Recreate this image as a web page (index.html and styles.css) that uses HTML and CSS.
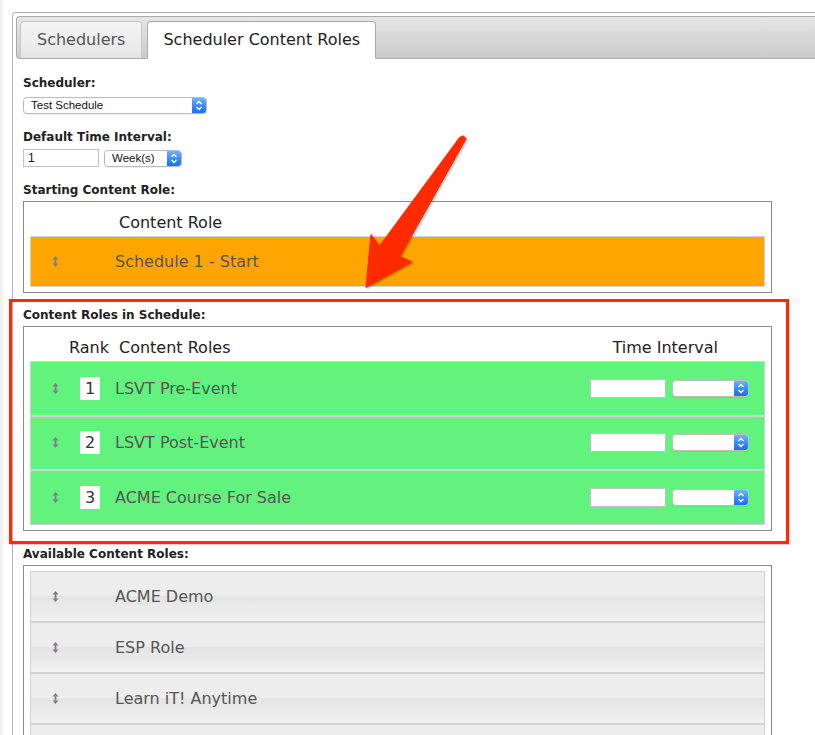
FILE: index.html
```html
<!DOCTYPE html>
<html>
<head>
<meta charset="utf-8">
<title>Scheduler Content Roles</title>
<link rel="stylesheet" href="styles.css">
</head>
<body>
<div class="page">
  <div class="panel">
    <div class="tabbar">
      <div class="tab">Schedulers</div>
      <div class="tab active">Scheduler Content Roles</div>
    </div>
    <div class="content">
      <div class="field first">
        <label class="lbl lbl-sel">Scheduler:</label>
        <div class="select sel-wide">
          <span class="sel-text">Test Schedule</span>
          <span class="sel-btn"><svg width="14" height="15" viewBox="0 0 14 15"><polyline points="4.5,6 7,3.5 9.5,6" fill="none" stroke="#fff" stroke-width="1.4"/><polyline points="4.5,9 7,11.5 9.5,9" fill="none" stroke="#fff" stroke-width="1.4"/></svg></span>
        </div>
      </div>

      <div class="field">
        <label class="lbl lbl-int">Default Time Interval:</label>
        <div class="inline">
          <input class="input" type="text" value="1">
          <div class="select sel-week">
            <span class="sel-text">Week(s)</span>
            <span class="sel-btn"><svg width="14" height="15" viewBox="0 0 14 15"><polyline points="4.5,6 7,3.5 9.5,6" fill="none" stroke="#fff" stroke-width="1.4"/><polyline points="4.5,9 7,11.5 9.5,9" fill="none" stroke="#fff" stroke-width="1.4"/></svg></span>
          </div>
        </div>
      </div>

      <div class="field">
        <label class="lbl">Starting Content Role:</label>
        <div class="box">
          <div class="box-head"><span class="h-role">Content Role</span></div>
          <div class="row orange">
            <span class="drag"><svg width="7" height="11" viewBox="0 0 7 11"><path d="M3.5 0 L6.5 3.6 L0.5 3.6 Z M2.6 3.6 H4.4 V7.4 H2.6 Z M0.5 7.4 L6.5 7.4 L3.5 11 Z" fill="#857d88"/></svg></span>
            <span class="name no-rank">Schedule 1 - Start</span>
          </div>
        </div>
      </div>

      <div class="field highlight">
        <label class="lbl">Content Roles in Schedule:</label>
        <div class="box">
          <div class="box-head">
            <span class="h-rank">Rank</span>
            <span class="h-roles">Content Roles</span>
            <span class="h-time">Time Interval</span>
          </div>
          <div class="row green">
            <span class="drag"><svg width="7" height="11" viewBox="0 0 7 11"><path d="M3.5 0 L6.5 3.6 L0.5 3.6 Z M2.6 3.6 H4.4 V7.4 H2.6 Z M0.5 7.4 L6.5 7.4 L3.5 11 Z" fill="#857d88"/></svg></span>
            <span class="rank">1</span>
            <span class="name">LSVT Pre-Event</span>
            <input class="input row-input" type="text" value="">
            <div class="select sel-row">
              <span class="sel-text"></span>
              <span class="sel-btn"><svg width="14" height="15" viewBox="0 0 14 15"><polyline points="4.5,6 7,3.5 9.5,6" fill="none" stroke="#fff" stroke-width="1.4"/><polyline points="4.5,9 7,11.5 9.5,9" fill="none" stroke="#fff" stroke-width="1.4"/></svg></span>
            </div>
          </div>
          <div class="row green">
            <span class="drag"><svg width="7" height="11" viewBox="0 0 7 11"><path d="M3.5 0 L6.5 3.6 L0.5 3.6 Z M2.6 3.6 H4.4 V7.4 H2.6 Z M0.5 7.4 L6.5 7.4 L3.5 11 Z" fill="#857d88"/></svg></span>
            <span class="rank">2</span>
            <span class="name">LSVT Post-Event</span>
            <input class="input row-input" type="text" value="">
            <div class="select sel-row">
              <span class="sel-text"></span>
              <span class="sel-btn"><svg width="14" height="15" viewBox="0 0 14 15"><polyline points="4.5,6 7,3.5 9.5,6" fill="none" stroke="#fff" stroke-width="1.4"/><polyline points="4.5,9 7,11.5 9.5,9" fill="none" stroke="#fff" stroke-width="1.4"/></svg></span>
            </div>
          </div>
          <div class="row green">
            <span class="drag"><svg width="7" height="11" viewBox="0 0 7 11"><path d="M3.5 0 L6.5 3.6 L0.5 3.6 Z M2.6 3.6 H4.4 V7.4 H2.6 Z M0.5 7.4 L6.5 7.4 L3.5 11 Z" fill="#857d88"/></svg></span>
            <span class="rank">3</span>
            <span class="name">ACME Course For Sale</span>
            <input class="input row-input" type="text" value="">
            <div class="select sel-row">
              <span class="sel-text"></span>
              <span class="sel-btn"><svg width="14" height="15" viewBox="0 0 14 15"><polyline points="4.5,6 7,3.5 9.5,6" fill="none" stroke="#fff" stroke-width="1.4"/><polyline points="4.5,9 7,11.5 9.5,9" fill="none" stroke="#fff" stroke-width="1.4"/></svg></span>
            </div>
          </div>
        </div>
      </div>

      <div class="field after-highlight">
        <label class="lbl">Available Content Roles:</label>
        <div class="box box-avail">
          <div class="row grey">
            <span class="drag"><svg width="7" height="11" viewBox="0 0 7 11"><path d="M3.5 0 L6.5 3.6 L0.5 3.6 Z M2.6 3.6 H4.4 V7.4 H2.6 Z M0.5 7.4 L6.5 7.4 L3.5 11 Z" fill="#857d88"/></svg></span>
            <span class="name no-rank">ACME Demo</span>
          </div>
          <div class="row grey">
            <span class="drag"><svg width="7" height="11" viewBox="0 0 7 11"><path d="M3.5 0 L6.5 3.6 L0.5 3.6 Z M2.6 3.6 H4.4 V7.4 H2.6 Z M0.5 7.4 L6.5 7.4 L3.5 11 Z" fill="#857d88"/></svg></span>
            <span class="name no-rank">ESP Role</span>
          </div>
          <div class="row grey">
            <span class="drag"><svg width="7" height="11" viewBox="0 0 7 11"><path d="M3.5 0 L6.5 3.6 L0.5 3.6 Z M2.6 3.6 H4.4 V7.4 H2.6 Z M0.5 7.4 L6.5 7.4 L3.5 11 Z" fill="#857d88"/></svg></span>
            <span class="name no-rank">Learn iT! Anytime</span>
          </div>
          <div class="row grey"></div>
        </div>
      </div>
    </div>
  </div>
</div>

<svg class="arrow" width="815" height="735" viewBox="0 0 815 735">
  <polygon points="459.5,137.5 463,135.8 466.2,138.6 400,256.5 412,262 366,287.5 371,234.5 379.5,246" fill="#ff2a00" stroke="#ff2a00" stroke-width="1" stroke-linejoin="round"/>
</svg>
</body>
</html>
```

FILE: styles.css
```css
html, body {
  margin: 0;
  padding: 0;
  background: #fff;
}

body {
  position: relative;
  font-family: "DejaVu Sans", Verdana, sans-serif;
  color: #222;
  overflow: hidden;
  height: 735px;
}

.page {
  border-left: 3px solid #f1f1f1;
  padding: 12px 0 0 9px;
}

.panel {
  border: 1px solid #b3b3b3;
  border-right: none;
  border-radius: 4px 0 0 0;
  padding: 3px 0 0 3px;
  min-height: 760px;
}

/* ---------- tabs ---------- */
.tabbar {
  display: flex;
  align-items: flex-end;
  height: 41px;
  padding-left: 3px;
  border: 1px solid #aaa;
  border-right: none;
  border-radius: 4px 0 0 4px;
  background: linear-gradient(to bottom, #e6e6e6 0%, #d6d6d6 60%, #cbcbcb 100%);
}

.tab {
  box-sizing: border-box;
  height: 38px;
  margin-bottom: -1px;
  padding: 0 16px;
  border: 1px solid #c6c6c6;
  border-bottom-color: #aaa;
  border-radius: 4px 4px 0 0;
  background: linear-gradient(to bottom, #f3f3f3 0%, #ececec 60%, #e4e4e4 100%);
  color: #555;
  font-size: 16px;
  line-height: 36px;
  white-space: nowrap;
}

.tab.active {
  margin-left: 5px;
  padding: 0 15px;
  border-color: #aaa;
  border-bottom-color: #fff;
  background: #fff;
  color: #222;
}

/* ---------- content ---------- */
.content {
  padding: 17px 0 0 7px;
}

.field {
  margin-top: 16px;
}

.field.first {
  margin-top: 0;
}

.lbl {
  display: block;
  font-weight: bold;
  font-size: 12px;
  line-height: 14px;
  color: #222;
  margin-bottom: 4px;
}

.lbl-sel {
  margin-bottom: 7px;
}

.lbl-int {
  margin-bottom: 5px;
}

.inline {
  display: flex;
  align-items: center;
}

.input {
  box-sizing: border-box;
  width: 76px;
  height: 18px;
  margin: 0;
  padding: 0 0 0 4px;
  border: 1px solid #c2c2c2;
  border-radius: 0;
  background: #fff;
  font-family: "Liberation Sans", Arial, sans-serif;
  font-size: 12px;
  color: #111;
  outline: none;
}

.select {
  box-sizing: border-box;
  display: flex;
  align-items: stretch;
  height: 17px;
  border: 1px solid #bcbcbc;
  border-radius: 4px;
  background: #fff;
  overflow: hidden;
  box-shadow: 0 1px 0 rgba(0, 0, 0, 0.06);
}

.sel-text {
  flex: 1;
  padding-left: 7px;
  font-family: "Liberation Sans", Arial, sans-serif;
  font-size: 11.5px;
  line-height: 15px;
  color: #111;
  white-space: nowrap;
}

.sel-btn {
  width: 14px;
  display: flex;
  align-items: center;
  justify-content: center;
  background: linear-gradient(to bottom, #72b3ff 0%, #3d8cfb 50%, #1a6ff3 100%);
}

.sel-wide {
  width: 184px;
}

.sel-week {
  width: 78px;
  margin-left: 5px;
}

/* ---------- boxes ---------- */
.box {
  box-sizing: border-box;
  width: 749px;
  border: 1px solid #8a8a8a;
  padding: 6px 6px 5px 6px;
  background: #fff;
}

.box-avail {
  padding-top: 5px;
  min-height: 220px;
}

.box-head {
  display: flex;
  align-items: center;
  height: 28px;
  font-size: 16px;
  color: #222;
  padding-left: 39px;
}

.h-role {
  margin-left: 50px;
}

.h-roles {
  margin-left: 10px;
}

.h-time {
  margin-left: auto;
  margin-right: 47px;
}

.row {
  box-sizing: border-box;
  display: flex;
  align-items: center;
  height: 51px;
  border: 1px solid #d2d2d2;
  font-size: 16px;
  color: #555;
}

.row.orange {
  background: #ffa500;
  border-color: #cfd3d6;
}

.row.green {
  height: 54.5px;
  background: #62f27e;
}

.row.grey {
  background: linear-gradient(to bottom, #ededed 0%, #ededed 50%, #e4e4e4 50%, #f1f1f1 100%);
}

.drag {
  display: flex;
  width: 7px;
  margin-left: 21px;
}

.rank {
  width: 20px;
  height: 23px;
  margin-left: 21px;
  background: #fff;
  color: #333;
  font-size: 16px;
  line-height: 23px;
  text-align: center;
}

.name {
  margin-left: 15px;
  white-space: nowrap;
}

.name.no-rank {
  margin-left: 56px;
}

.row-input {
  margin-left: auto;
  height: 19px;
  width: 76px;
}

.sel-row {
  width: 77px;
  margin-left: 6px;
  margin-right: 15px;
  border-color: #b9c4b9;
}

/* ---------- annotation ---------- */
.field.highlight {
  box-sizing: border-box;
  width: 780px;
  margin-top: 6px;
  margin-left: -14px;
  padding: 6px 14px 10px 11px;
  border: 3px solid #ff2a00;
  box-shadow: 1px 1px 1px rgba(0, 0, 0, 0.18);
  position: relative;
}

.field.after-highlight {
  margin-top: 3px;
}

.arrow {
  position: absolute;
  top: 0;
  left: 0;
  pointer-events: none;
  filter: drop-shadow(1px 1px 1px rgba(0, 0, 0, 0.3));
}
```
